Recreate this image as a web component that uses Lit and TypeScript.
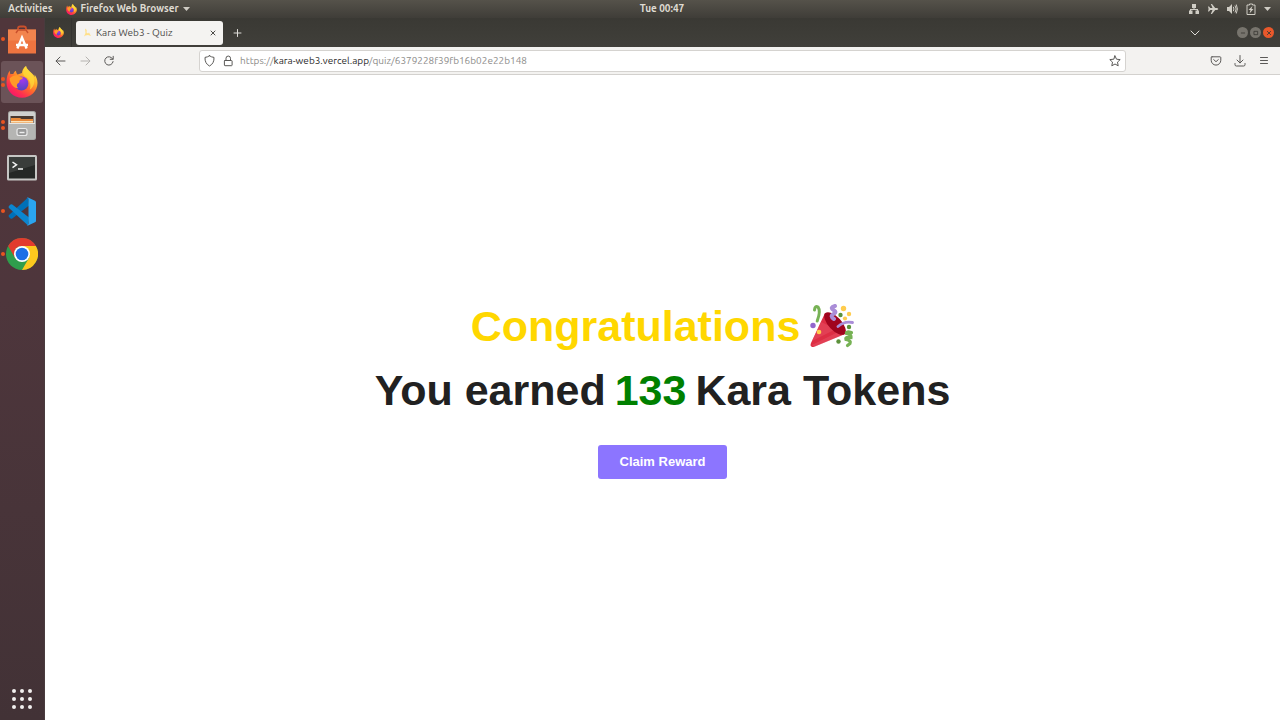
import { LitElement, html, css, svg } from "lit";
import { customElement, property } from "lit/decorators.js";

const firefox = html`<svg viewBox="0 0 32 32" aria-hidden="true">
  <defs>
    <linearGradient id="fb" x1=".85" y1=".05" x2=".2" y2=".95">
      <stop offset="0" stop-color="#fff24a" /><stop offset=".3" stop-color="#ffb52a" />
      <stop offset=".55" stop-color="#ff6a2c" /><stop offset=".8" stop-color="#ff2f50" />
      <stop offset="1" stop-color="#f5156c" />
    </linearGradient>
    <radialGradient id="fp" cx=".55" cy=".2" r=".9">
      <stop offset="0" stop-color="#a437ee" /><stop offset="1" stop-color="#4a48b8" />
    </radialGradient>
  </defs>
  <path fill="url(#fb)" d="M20 0c-2.500 2-4 4.500-4 7L11.500 8.500C10.200 7.600 10.100 5.600 10 4.800 8.700 5.500 7.800 6.500 7.300 8c-1-.2-2 0-2.800.3C3.900 7.500 3.800 6 4 4.600 1.500 7.300.5 12 .5 16.500.5 25 7.400 31.800 16 31.800S31.500 25 31.500 17c0-3.300-1.300-6.500-3-8.500.2 1 .3 1.800.2 2.500C26.600 6.200 21 4.800 20 0z" />
  <circle cx="15.500" cy="17.500" r="6.900" fill="url(#fp)" />
  <path fill="#ff9a28" d="M3.600 12.500c2.500-3 5.500-3.500 8.200-3.200 1 1.400 2.500 2 5.200 2.200-.1 1.600-2.600 2-3.300 2.800-.6 1 .2 2.400-1.800 2.900-1.500 1.500-1.500 3.500.4 5C8 22.500 3.800 17.500 3.600 12.500z" />
  <path fill="#ffd93a" d="M20 0c1 5.500 8.400 7.500 8.300 15.500-.3 4.200-2.300 7-4.500 8.300 1.500-4.300.4-10.600-4.400-13C16 9 16.500 3 20 0z" opacity=".75" />
</svg>`;

const store = html`<svg viewBox="0 0 28 28" aria-hidden="true">
  <path d="M10 7V3.200Q10 1 12.200 1h3.600Q18 1 18 3.200V7" fill="none" stroke="#c9502c" stroke-width="1.800" />
  <path d="M0 4h28v24H0z" fill="#ee7440" /><path d="M0 4h28v11H0z" fill="#f58f58" opacity=".6" />
  <path d="M8 7.500l2-3h8l2 3" fill="none" stroke="#c9502c" stroke-width="1.400" />
  <path d="M9.400 23L14 12l4.600 11M8 19.500h12" fill="none" stroke="#fff" stroke-width="2.400" />
</svg>`;

const files = html`<svg viewBox="0 0 28 29" aria-hidden="true">
  <rect width="28" height="29" rx="2.500" fill="#a7a7a5" />
  <path d="M1 2.500Q1 1 2.500 1h23Q27 1 27 2.500V12H1z" fill="#d0d0ce" />
  <path d="M2.500 5h23v7h-23z" fill="#4a3930" />
  <path d="M3 7h9l1.500 1H25v4H3z" fill="#e98b3c" /><path d="M3 10h22v1.500H3z" fill="#f9e3bb" />
  <rect x="1" y="12" width="26" height="16" rx="1.500" fill="#b5b5b3" />
  <path d="M1 12.500h26" stroke="#e6e6e4" />
  <rect x="9" y="17.500" width="10" height="7" rx="2" fill="#999" stroke="#e9e9e9" stroke-width="1.200" />
  <path d="M11.500 21.500h5" stroke="#eee" stroke-width="1.400" />
</svg>`;

const terminal = html`<svg viewBox="0 0 30 26" aria-hidden="true">
  <rect width="30" height="25.500" rx="1.500" fill="#c6c6c4" />
  <path d="M2 2h26v21.500H2z" fill="#252826" /><path d="M2 2h26v8L2 18z" fill="#3a3d3b" />
  <path d="M5.500 7l4 2.800-4 2.800M11 14h5" fill="none" stroke="#f4f4f4" stroke-width="1.500" />
</svg>`;

const code = html`<svg viewBox="0 0 28 28" aria-hidden="true">
  <path d="M20 0L1 17.500q-1 1 0 2l1.500 1.400q.9.700 1.800 0L21 8z" fill="#0070b8" />
  <path d="M20 28L1 10.500q-1-1 0-2l1.500-1.400q.9-.7 1.800 0L21 20z" fill="#0b86d0" />
  <path d="M20 0l7 3.200q1 .5 1 1.600v18.400q0 1.100-1 1.600L20 28q-1 0-1.600-.8Q20.500 28 20.500 26V2q0-2-2-1.200Q19 0 20 0z" fill="#2ba5f0" />
</svg>`;

const chrome = html`<svg viewBox="0 0 32 32" aria-hidden="true">
  <circle cx="16" cy="16" r="16" fill="#2f9e4c" />
  <path d="M29.860 8A16 16 0 0 1 16 32l6.930-12L24 16 16 8z" fill="#fcc81e" />
  <path d="M2.140 8A16 16 0 0 1 29.860 8H16a8 8 0 0 0-6.930 4L9.070 20z" fill="#e23b2e" />
  <circle cx="16" cy="16" r="8" fill="#fff" /><circle cx="16" cy="16" r="6.300" fill="#1b6fe6" />
</svg>`;

const line = (d: string, size = 12) =>
  html`<svg class="line" width=${size} height=${size} viewBox="0 0 12 12" aria-hidden="true">${svg`<path d=${d} />`}</svg>`;

const paths = {
  back: "M5 2L1 6l4 4M1.200 6H10",
  forward: "M7 2l4 4-4 4M10.800 6H2",
  reload: "M9.700 4A4.200 4.200 0 1 0 10.100 6.600M10.200 1.300v3H7.200",
  shield: "M5.500 .8Q7.500 2.200 10 2.400 10.300 8.500 5.500 11 .7 8.500 1 2.400 3.500 2.200 5.500 .8z",
  lock: "M2 5.500h6.500q.6 0 .6.600v4q0 .6-.6.600H2q-.6 0-.6-.6v-4q0-.6.600-.6zM3 5.500V3.300a2.250 2.250 0 0 1 4.500 0v2.200",
  star: "M6 .9l1.500 3.300 3.700.4-2.700 2.500.7 3.700L6 9l-3.200 1.800.7-3.700L.8 4.600l3.700-.4z",
  pocket: "M2 1.800h8q.8 0 .8.800v2.700a4.800 4.800 0 0 1-9.600 0V2.600q0-.8.800-.8zM3.700 4.600L6 6.700l2.300-2.100",
  download: "M6 .5v7.300M3 5l3 3 3-3M1 8.500v1.200q0 1.300 1.300 1.300h7.400q1.300 0 1.300-1.300V8.500",
  menu: "M2.500 2.500h7M2.500 5.500h7M2.500 8.500h7",
  chevron: "M2 4l4 4 4-4",
  close: "M4 4l4 4M8 4L4 8",
  plus: "M6.500 2.500v7M3 6h7",
};

const popper = html`<svg class="popper" viewBox="0 0 44 44" role="img" aria-label="party popper">
  <path d="M15 9L1 39q-1.500 4 2.500 4L35 30z" fill="#dd2e44" />
  <path d="M11 18L2 37l24-12zM2 41l30-15 3 4L4 43z" fill="#ea596e" opacity=".4" />
  <ellipse cx="25" cy="19.500" rx="6.500" ry="14.200" transform="rotate(-43 25 19.500)" fill="#a0041e" />
  <path d="M4.500 6Q5 1.500 8 3q3 4-.8 14" fill="none" stroke="#77b255" stroke-width="3" stroke-linecap="round" />
  <path d="M25 2q-5.500 1.500-1.500 4 4 2 0 4-4 2 .5 5" fill="none" stroke="#aa8dd8" stroke-width="4" stroke-linecap="round" />
  <path d="M28 22.500q6-5.500 14.500-4" fill="none" stroke="#aa8dd8" stroke-width="2.800" stroke-linecap="round" />
  <path d="M41.500 28.500q-5.500-1.500-5 1 5 1 4.500 4-6-1-5 2 5.500 1 4 4l-2.500 2" fill="none" stroke="#77b255" stroke-width="3.200" stroke-linecap="round" />
  <g fill="#ffcc4d"><circle cx="33.500" cy="4.500" r="2.700" /><circle cx="39" cy="10" r="2.200" /><circle cx="35" cy="14.500" r="2.100" /><circle cx="9" cy="28" r="2.300" /></g>
  <g fill="#5c913b"><circle cx="30.500" cy="11" r="2.200" /><circle cx="39" cy="23" r="2.200" /><circle cx="28.500" cy="37.500" r="2.200" /></g>
  <circle cx="3" cy="21.500" r="2.700" fill="#9266cc" />
</svg>`;

@customElement("dock-item")
class DockItem extends LitElement {
  @property() label = "";
  @property() picture: unknown;
  @property({ type: Number }) windows = 0;
  @property({ type: Boolean, reflect: true }) active = false;

  static styles = css`
    :host { display: block; }
    button {
      display: grid; grid-template-columns: 5px 32px; align-items: center;
      width: 42px; height: 42px; padding: 0; border: 0; border-radius: 3px;
      background: none;
    }
    :host([active]) button { background: #6b5358; }
    .dots { display: grid; gap: 2px; }
    .dots i { width: 4px; height: 4px; border-radius: 50%; background: #e95420; }
    .icon { display: grid; justify-items: center; }
    svg { display: block; width: 28px; height: 29px; }
    .wide svg { width: 32px; height: 32px; }
    .flat svg { width: 30px; height: 26px; }
  `;

  private shape() {
    if (this.label === "Terminal") return "flat";
    return ["Firefox", "Chrome"].includes(this.label) ? "wide" : "";
  }

  render() {
    return html`<button aria-label=${this.label}>
      <span class="dots">${Array.from({ length: this.windows }, () => html`<i></i>`)}</span>
      <span class="icon ${this.shape()}">${this.picture}</span>
    </button>`;
  }
}

@customElement("app-root")
class AppRoot extends LitElement {
  static styles = css`
    :host {
      display: grid; grid-template-rows: 18px 1fr; height: 100vh;
      font: 10px/14px Ubuntu, "Noto Sans", sans-serif; background: #fff;
    }
    * { box-sizing: border-box; }
    button { padding: 0; border: 0; background: none; color: inherit; font: inherit; }
    svg { display: block; flex: none; }
    .line { fill: none; stroke: currentColor; stroke-width: 1; stroke-linecap: round; stroke-linejoin: round; }

    .panel {
      display: grid; grid-template-columns: 1fr auto 1fr; align-items: center;
      padding: 0 9px 0 8px; color: #dfdbd2; font-weight: 600;
      background: linear-gradient(#55524a, #3f3d38);
    }
    .panel time { padding-left: 45px; }
    .left, .tray { display: flex; align-items: center; }
    .left { gap: 13px; white-space: nowrap; }
    .app { display: flex; align-items: center; gap: 4px; }
    .app svg { width: 11px; height: 11px; }
    .app .caret, .tray .caret { width: 7px; height: 4px; fill: #cfccc4; }
    .tray { justify-content: flex-end; gap: 7px; fill: #d0cdc5; }

    .desktop { display: grid; grid-template-columns: 45px 1fr; min-height: 0; }
    .dock {
      display: flex; flex-direction: column; gap: 1px; padding: 0 1px 3px;
      background: linear-gradient(#50363b, #4e363c 40%, #423236); border-right: 1px solid #493b3e;
    }
    .apps { display: grid; place-items: center; width: 42px; height: 36px; margin-top: auto; fill: #f2f0ef; }

    .browser { display: grid; grid-template-rows: 29px 28px 1fr; min-width: 0; }
    .tabs { display: flex; align-items: center; color: #dedcd8; background: linear-gradient(#3a3934, #403f3a); }
    .pinned { display: grid; place-items: center; width: 27px; height: 29px; border-right: 1px solid #343330; }
    .pinned svg { width: 11px; height: 11px; }
    .tab {
      display: flex; align-items: center; gap: 4px; width: 147px; height: 24px; margin: 0 8px 0 4px;
      padding: 0 4px 0 7px; border-radius: 3px; background: #f4f3f1; color: #4c4b48;
    }
    .title { flex: 1; white-space: nowrap; }
    .controls { display: flex; align-items: center; gap: 2px; margin-left: auto; padding-right: 6px; }
    .controls .list { margin-right: 34px; }
    .win { display: grid; place-items: center; width: 11px; height: 11px; border-radius: 50%; background: #77746d; color: #3a3934; }
    .win.close { background: #e9582b; }

    .bar {
      display: grid; grid-template-columns: 1fr minmax(0, 927px) 1fr; align-items: center;
      padding: 0 10px; background: #f3f2f0; border-bottom: 1px solid #d3d1ce; color: #5a5957;
    }
    .nav { display: flex; gap: 12px; }
    .nav .off { color: #b5b3b0; }
    .address {
      display: flex; align-items: center; gap: 7px; height: 22px; padding: 0 4px;
      background: #fff; border: 1px solid #d5d3d0; border-radius: 3px;
    }
    .url { flex: 1; margin-left: -2px; color: #8d8c8a; text-decoration: none; white-space: nowrap; }
    .url b { color: #2b2b2a; font-weight: 400; }
    .tools { display: flex; justify-content: flex-end; gap: 12px; }

    .page {
      display: flex; flex-direction: column; align-items: center; justify-content: center;
      padding-bottom: 22px; font-family: "Liberation Sans", Arial, sans-serif; color: #212121;
    }
    h1, h2 { display: flex; align-items: center; margin: 0; font-size: 43px; line-height: 64px; font-weight: 700; }
    h1 { gap: 10px; color: #ffd700; }
    h2 { gap: 9px; }
    h2 b { color: #008000; }
    .popper { width: 44px; height: 44px; }
    .claim {
      margin-top: 23px; padding: 0 22px; height: 34px; border-radius: 3px;
      background: #8c75ff; color: #fff; font: 700 13px/34px "Liberation Sans", Arial, sans-serif;
    }
  `;

  private caret() {
    return html`<svg class="caret" viewBox="0 0 7 4" aria-hidden="true"><path d="M0 0h7L3.500 4z" /></svg>`;
  }

  private tray() {
    return html`<div class="tray">
      <svg width="12" height="12" viewBox="0 0 12 12"><path d="M4 1h4v4H4zM1 7.500h3.500V11H1zM7.500 7.500H11V11H7.500zM5.500 5h1v1H10v2H9V7H3v1H2V6h3.500z" /></svg>
      <svg width="12" height="12" viewBox="0 0 12 12"><path d="M1 3.500h1L3.300 5h2.200L3.800 1H5l3.200 4H10q1.300.3 1.300 1T10 7H8.200L5 11H3.800l1.700-4H3.300L2 8.500H1L1.600 6z" /></svg>
      <svg width="12" height="12" viewBox="0 0 12 12"><path d="M1 4h2l3-3v10L3 8H1z" /><path d="M7.300 3.800q1.300 2.200 0 4.400M9 2.500q2.300 3.500 0 7M10.300 1.500q2.200 4.500 0 9" fill="none" stroke="#d0cdc5" /></svg>
      <svg width="12" height="12" viewBox="0 0 12 12"><path d="M4.500 1h3v1H10v9.500H2V2h2.500z" fill="none" stroke="#d0cdc5" /><path d="M7.500 3L3.500 7h2l-1 3.500 4-4.500h-2z" /></svg>
      ${this.caret()}
    </div>`;
  }

  render() {
    return html`
      <header class="panel">
        <div class="left"><span>Activities</span><span class="app">${firefox}<span>Firefox Web Browser</span>${this.caret()}</span></div>
        <time>Tue 00:47</time>
        ${this.tray()}
      </header>
      <div class="desktop">
        <nav class="dock" aria-label="Dock">
          <dock-item label="Software" windows="1" .picture=${store}></dock-item>
          <dock-item label="Firefox" windows="2" active .picture=${firefox}></dock-item>
          <dock-item label="Files" windows="2" .picture=${files}></dock-item>
          <dock-item label="Terminal" .picture=${terminal}></dock-item>
          <dock-item label="Code" windows="1" .picture=${code}></dock-item>
          <dock-item label="Chrome" windows="1" .picture=${chrome}></dock-item>
          <button class="apps" aria-label="Show applications">
            <svg width="20" height="20" viewBox="0 0 20 20">${[2, 10, 18].map((y) => [2, 10, 18].map((x) => svg`<circle cx=${x} cy=${y} r="2" />`))}</svg>
          </button>
        </nav>
        <div class="browser">
          <div class="tabs">
            <button class="pinned" aria-label="Firefox View">${firefox}</button>
            <div class="tab">
              <svg width="9" height="9" viewBox="0 0 9 9"><path d="M2 .5l1.800 1.500L3.500 4.500l1.500 1 1-1L8 8 5 7 2.500 7.500 1 8.500 2.500 5z" fill="#ffe08a" /></svg>
              <span class="title">Kara Web3 - Quiz</span>
              <button aria-label="Close tab">${line(paths.close)}</button>
            </div>
            <button aria-label="New tab">${line(paths.plus)}</button>
            <div class="controls">
              <button class="list" aria-label="List all tabs">${line(paths.chevron)}</button>
              <button class="win" aria-label="Minimise">${line("M4 6h4", 10)}</button>
              <button class="win" aria-label="Maximise">${line("M4 4h4v4H4z", 10)}</button>
              <button class="win close" aria-label="Close window">${line("M4 4l4 4M8 4L4 8", 10)}</button>
            </div>
          </div>
          <div class="bar">
            <div class="nav">
              <button aria-label="Back">${line(paths.back)}</button>
              <button class="off" aria-label="Forward">${line(paths.forward)}</button>
              <button aria-label="Reload">${line(paths.reload)}</button>
            </div>
            <div class="address">
              ${line(paths.shield)}${line(paths.lock)}
              <a class="url" href="#">https://<b>kara-web3.vercel.app</b>/quiz/6379228f39fb16b02e22b148</a>
              <button aria-label="Bookmark">${line(paths.star)}</button>
            </div>
            <div class="tools">
              <button aria-label="Pocket">${line(paths.pocket)}</button>
              <button aria-label="Downloads">${line(paths.download)}</button>
              <button aria-label="Menu">${line(paths.menu)}</button>
            </div>
          </div>
          <main class="page">
            <h1>Congratulations ${popper}</h1>
            <h2><span>You earned</span><b>133</b><span>Kara Tokens</span></h2>
            <button class="claim">Claim Reward</button>
          </main>
        </div>
      </div>
    `;
  }
}
